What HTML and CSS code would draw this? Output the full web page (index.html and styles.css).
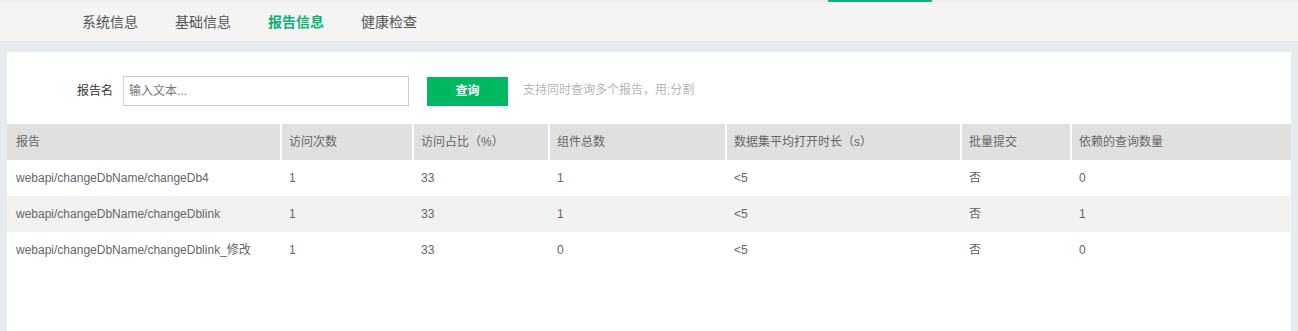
FILE: index.html
```html
<!DOCTYPE html>
<html lang="zh-CN">
  <head>
    <meta charset="UTF-8" />
    <meta name="viewport" content="width=device-width, initial-scale=1.0" />
    <title>报告信息</title>
    <link rel="stylesheet" href="styles.css">
  </head>
  <body>
    <div class="topline"><span class="topline-mark"></span></div>
    <header class="tabs">
      <a>系统信息</a>
      <a>基础信息</a>
      <a class="active">报告信息</a>
      <a>健康检查</a>
    </header>

    <main class="page">
      <section class="panel">
        <form class="query" onsubmit="return false;">
          <label for="reportName">报告名</label>
          <input type="text" id="reportName" placeholder="输入文本..." />
          <button type="submit">查询</button>
          <span class="hint">支持同时查询多个报告，用;分割</span>
        </form>

        <table class="report-table">
          <thead>
            <tr>
              <th class="c-name">报告</th>
              <th class="c-visits">访问次数</th>
              <th class="c-ratio">访问占比（%）</th>
              <th class="c-widgets">组件总数</th>
              <th class="c-open">数据集平均打开时长（s）</th>
              <th class="c-batch">批量提交</th>
              <th>依赖的查询数量</th>
            </tr>
          </thead>
          <tbody>
            <tr>
              <td>webapi/changeDbName/changeDb4</td>
              <td>1</td>
              <td>33</td>
              <td>1</td>
              <td>&lt;5</td>
              <td>否</td>
              <td>0</td>
            </tr>
            <tr>
              <td>webapi/changeDbName/changeDblink</td>
              <td>1</td>
              <td>33</td>
              <td>1</td>
              <td>&lt;5</td>
              <td>否</td>
              <td>1</td>
            </tr>
            <tr>
              <td>webapi/changeDbName/changeDblink_修改</td>
              <td>1</td>
              <td>33</td>
              <td>0</td>
              <td>&lt;5</td>
              <td>否</td>
              <td>0</td>
            </tr>
          </tbody>
        </table>
      </section>
    </main>
  </body>
</html>
```

FILE: styles.css
```css
* {
  box-sizing: border-box;
  margin: 0;
  padding: 0;
}

html,
body {
  height: 100%;
}

body {
  font-family: "Liberation Sans", "Noto Sans CJK SC", sans-serif;
  font-size: 12px;
  line-height: 16px;
  background-color: #e8ebee;
  color: #666;
  overflow: hidden;
}

.topline {
  height: 2px;
  background-color: #ececec;
  display: flex;
}

.topline-mark {
  margin-left: 828px;
  width: 104px;
  background-color: #0cb574;
}

.tabs {
  height: 39px;
  background-color: #f4f4f4;
  display: flex;
  align-items: center;
  gap: 37px;
  padding-left: 82px;
}

.tabs a {
  font-size: 14px;
  line-height: 20px;
  color: #555;
  cursor: pointer;
}

.tabs a.active {
  color: #0db274;
  font-weight: bold;
}

.page {
  padding: 11px 7px 0;
  height: calc(100% - 41px);
}

.panel {
  background-color: #fff;
  height: 100%;
}

.query {
  display: flex;
  align-items: center;
  padding: 24px 0 18px;
}

.query label {
  width: 106px;
  text-align: right;
  margin-right: 10px;
  color: #333;
}

.query input {
  width: 286px;
  height: 30px;
  border: 1px solid #ccc;
  padding: 0 5px;
  font: inherit;
  color: #333;
}

.query input::placeholder {
  color: #777;
}

.query button {
  width: 81px;
  height: 29px;
  margin-left: 18px;
  border: none;
  background-color: #00b862;
  color: #fff;
  font: inherit;
  font-weight: bold;
  cursor: pointer;
}

.hint {
  margin-left: 15px;
  color: #b5b5b5;
  margin-top: -3px;
}

.report-table {
  width: 100%;
  table-layout: fixed;
  border-collapse: separate;
  border-spacing: 0;
}

.report-table th,
.report-table td {
  height: 36px;
  padding-left: 7px;
  text-align: left;
  font-weight: normal;
  white-space: nowrap;
}

.report-table th {
  background-color: #e0e0e0;
  border-right: 2px solid #fff;
}

.report-table th:last-child {
  border-right: none;
}

.report-table th:first-child,
.report-table td:first-child {
  padding-left: 9px;
}

.report-table tbody tr:nth-child(2) {
  background-color: #f2f2f2;
}

.c-name { width: 275px; }
.c-visits { width: 132px; }
.c-ratio { width: 136px; }
.c-widgets { width: 177px; }
.c-open { width: 235px; }
.c-batch { width: 110px; }
```
